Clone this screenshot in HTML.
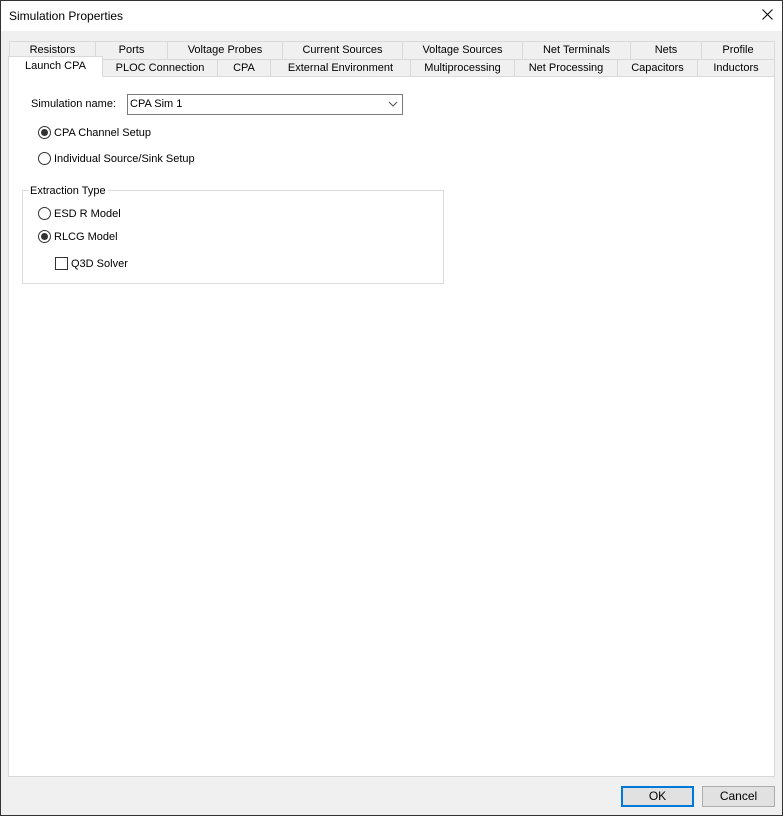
<!DOCTYPE html>
<html><head><style>
*{box-sizing:border-box;margin:0;padding:0}
body{width:783px;height:816px;background:#f0f0f0;font-family:"Liberation Sans",sans-serif;font-size:11px;color:#000;position:relative;overflow:hidden}
.a{position:absolute}
.win{left:0;top:0;width:783px;height:816px;border:1px solid #333}
.title{left:1px;top:1px;width:781px;height:30px;background:#fff}
.tab{position:absolute;height:18px;border:1px solid #d9d9d9;border-bottom:none;background:#f0f0f0;text-align:center;line-height:17px;font-size:11px}
.panel{left:8px;top:76px;width:767px;height:701px;background:#fff;border:1px solid #d9d9d9}
.radio{position:absolute;width:13px;height:13px;border:1px solid #333;border-radius:50%;background:#fff}
.radio.on::after{content:"";position:absolute;left:2px;top:2px;width:7px;height:7px;border-radius:50%;background:#333}
.lbl{position:absolute;font-size:11px;line-height:14px}
.btn{position:absolute;height:21px;border:1px solid #adadad;background:#e1e1e1;text-align:center;line-height:19px;font-size:12px}
</style></head><body>
<div class="a win"></div>
<div class="a title"></div>
<div class="a" style="left:9px;top:9px;font-size:12px">Simulation Properties</div>
<svg class="a" style="left:762px;top:9px" width="11" height="11"><path d="M0.5 0.5 L10.5 10.5 M10.5 0.5 L0.5 10.5" stroke="#000" stroke-width="1"/></svg>

<div class="tab" style="left:9px;top:41px;width:87px">Resistors</div>
<div class="tab" style="left:95px;top:41px;width:73px">Ports</div>
<div class="tab" style="left:167px;top:41px;width:116px">Voltage Probes</div>
<div class="tab" style="left:282px;top:41px;width:121px">Current Sources</div>
<div class="tab" style="left:402px;top:41px;width:121px">Voltage Sources</div>
<div class="tab" style="left:522px;top:41px;width:109px">Net Terminals</div>
<div class="tab" style="left:630px;top:41px;width:72px">Nets</div>
<div class="tab" style="left:701px;top:41px;width:74px">Profile</div>

<div class="tab" style="left:102px;top:59px;width:116px">PLOC Connection</div>
<div class="tab" style="left:217px;top:59px;width:54px">CPA</div>
<div class="tab" style="left:270px;top:59px;width:141px">External Environment</div>
<div class="tab" style="left:410px;top:59px;width:105px">Multiprocessing</div>
<div class="tab" style="left:514px;top:59px;width:104px">Net Processing</div>
<div class="tab" style="left:617px;top:59px;width:81px">Capacitors</div>
<div class="tab" style="left:697px;top:59px;width:78px">Inductors</div>

<div class="a panel"></div>
<div class="tab" style="left:8px;top:56px;width:95px;height:21px;background:#fff;line-height:19px;z-index:2">Launch CPA</div>

<div class="lbl" style="left:31px;top:97px">Simulation name:</div>
<div class="a" style="left:127px;top:94px;width:276px;height:21px;border:1px solid #7a7a7a;background:#fff;padding-left:2px;line-height:19px">CPA Sim 1</div>
<svg class="a" style="left:388px;top:100px" width="10" height="8"><path d="M1 2 L5 6 L9 2" fill="none" stroke="#555" stroke-width="1"/></svg>

<div class="radio on" style="left:38px;top:126px"></div>
<div class="lbl" style="left:54px;top:126px">CPA Channel Setup</div>
<div class="radio" style="left:38px;top:152px"></div>
<div class="lbl" style="left:54px;top:152px">Individual Source/Sink Setup</div>

<div class="a" style="left:22px;top:190px;width:422px;height:94px;border:1px solid #dcdcdc"></div>
<div class="lbl" style="left:29px;top:184px;background:#fff;padding:0 2px 0 1px">Extraction Type</div>
<div class="radio" style="left:38px;top:207px"></div>
<div class="lbl" style="left:54px;top:207px">ESD R Model</div>
<div class="radio on" style="left:38px;top:230px"></div>
<div class="lbl" style="left:54px;top:230px">RLCG Model</div>
<div class="a" style="left:55px;top:257px;width:13px;height:13px;border:1px solid #333;background:#fff"></div>
<div class="lbl" style="left:71px;top:257px">Q3D Solver</div>

<div class="btn" style="left:621px;top:786px;width:73px;border:2px solid #0078d7;line-height:17px">OK</div>
<div class="btn" style="left:702px;top:786px;width:73px">Cancel</div>
</body></html>
